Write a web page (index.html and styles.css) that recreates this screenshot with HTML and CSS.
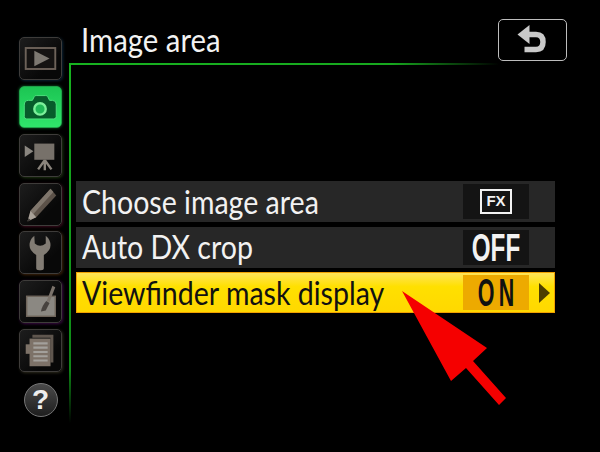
FILE: index.html
```html
<!DOCTYPE html>
<html lang="en">
<head>
<meta charset="utf-8">
<title>Image area</title>
<link rel="stylesheet" href="styles.css">
</head>
<body>
<div class="screen">
  <nav class="sidebar">
    <div class="tab tab-blue">
      <svg viewBox="0 0 43 43" class="icon"><rect x="6" y="10.500" width="31" height="22" fill="#151312" stroke="#6d6259" stroke-width="2"/><path d="M15 13.500 L31 21.500 L15 29.500Z" fill="#7d7871"/></svg>
    </div>
    <div class="tab tab-active">
      <svg viewBox="0 0 43 43" class="icon"><path d="M4.500 19 Q4.500 14 9 14 L13 14 L15 10 Q15.500 9 17 9 L27 9 Q28.500 9 29 10 L31 14 L34 14 Q38 14 38 18 L38 31 Q38 33.500 35.500 33.500 L7 33.500 Q4.500 33.500 4.500 31Z" fill="#075c2b" stroke="#4fe37f" stroke-width="1"/><circle cx="21" cy="23" r="6" fill="#1fb957" stroke="#7cf09a" stroke-width="2.500"/></svg>
    </div>
    <div class="tab tab-green">
      <svg viewBox="0 0 43 43" class="icon"><path d="M5 11 L14 17 L5 23Z" fill="#8a8680"/><rect x="15" y="9" width="21" height="17" fill="#77716a"/><path d="M26 26 L26 31 M25.500 27 L19 36 M26.500 27 L33 36 M26 28 L26 37" stroke="#8a847c" stroke-width="2.500" fill="none"/></svg>
    </div>
    <div class="tab tab-red">
      <svg viewBox="0 0 43 43" class="icon"><path d="M32 5 L38 12 L17 35 L8 39 L11 28Z" fill="#5c5249"/><path d="M32 5 L35 8.500 L14 31.500 L11 28Z" fill="#7f766c"/><path d="M11 28 L17 35 L8 39Z" fill="#a8a198"/><path d="M8.800 36 L11.500 38 L8 39.500Z" fill="#3a3633"/></svg>
    </div>
    <div class="tab tab-orange">
      <svg viewBox="0 0 43 43" class="icon"><path d="M15 4 Q10 8 10 14 Q10 20 17 24 L17 38 Q17 40 20 40 L22 40 Q25 40 25 38 L25 24 Q32 20 32 14 Q32 8 27 4 L27 12 Q21 17 15.500 12Z" fill="#827c74"/></svg>
    </div>
    <div class="tab tab-purple">
      <svg viewBox="0 0 43 43" class="icon"><rect x="7" y="16" width="30" height="21" fill="#8b8882" stroke="#6f655b" stroke-width="1.500"/><path d="M34 5 L37 6.500 L31 22 L28 21Z" fill="#7b736b"/><path d="M27.500 21 L31 23 L27 31 L22 32 Q23 26 27.500 21Z" fill="#47423e"/></svg>
    </div>
    <div class="tab tab-olive">
      <svg viewBox="0 0 43 43" class="icon"><path d="M13 5 L35 5 L35 34 L32 34 L32 8 L13 8Z" fill="#5f564e"/><path d="M11 15 L6 15 L6 25 L11 25Z" fill="#7d7268"/><rect x="10" y="9" width="22" height="29" fill="#7d7268"/><path d="M14 14 H29 M14 18.500 H29 M14 23 H29 M14 27.500 H29 M14 32 H29" stroke="#a3a09b" stroke-width="2.200"/></svg>
    </div>
    <div class="help">?</div>
  </nav>
  <main class="main">
    <header class="header">
      <h1 class="title"><span class="squeeze squeeze-title">Image area</span></h1>
      <div class="back">
        <svg viewBox="0 0 66 39" class="back-icon"><path d="M28 14.500 H37 Q44 14.500 44 22 Q44 29.500 37 29.500 H25.500" fill="none" stroke="#c9c9c9" stroke-width="5.500"/><path d="M18.500 14.500 L30.500 5 L30.500 24Z" fill="#c9c9c9"/></svg>
      </div>
    </header>
    <section class="panel">
      <div class="row">
        <span class="label"><span class="squeeze">Choose image area</span></span>
        <span class="value"><span class="fx">FX</span></span>
      </div>
      <div class="row">
        <span class="label"><span class="squeeze">Auto DX crop</span></span>
        <span class="value"><span class="big">OFF</span></span>
      </div>
      <div class="row row-active">
        <span class="label"><span class="squeeze">Viewfinder mask display</span></span>
        <span class="value value-on"><span class="big big-on">ON</span></span>
        <span class="caret"></span>
      </div>
    </section>
  </main>
  <svg class="pointer" viewBox="0 0 600 452"><path d="M402 291 L487 348 L473 361 L506 398 L499 405 L466 368 L451 381Z" fill="#f50000"/></svg>
</div>
</body>
</html>
```
FILE: styles.css
```css
* { box-sizing: border-box; }
html, body { margin: 0; padding: 0; background: #000; }
.screen {
  position: relative;
  display: flex;
  width: 600px;
  height: 452px;
  overflow: hidden;
  background: #000;
  font-family: "Lato", "Open Sans", sans-serif;
}
.sidebar {
  display: flex;
  flex-direction: column;
  align-items: center;
  gap: 5.7px;
  width: 43px;
  margin-left: 19px;
  padding-top: 37px;
}
.tab {
  flex: none;
  width: 43px;
  height: 43px;
  border: 1px solid #3e3c3a;
  border-radius: 5px;
  background: linear-gradient(135deg, #1d1d1d, #080808 70%);
}
.icon { display: block; width: 41px; height: 41px; }
.tab-blue { box-shadow: 1px 1px 3px #0c2436; }
.tab-green { box-shadow: 1px 1px 3px #1d3310; }
.tab-red { box-shadow: 1px 1px 3px #3c0a1c; }
.tab-orange { box-shadow: 1px 1px 3px #3f2208; }
.tab-purple { box-shadow: 1px 1px 3px #3c0a44; }
.tab-olive { box-shadow: 1px 1px 3px #2c2a1c; }
.tab-active {
  height: 42.500px;
  border-color: #1fa049;
  background: linear-gradient(180deg, #1cc553, #2fe56b);
  box-shadow: 0 0 3px #0d6a2c;
}
.help {
  width: 34px;
  height: 34px;
  margin-top: 6px;
  border: 1.500px solid #777;
  border-radius: 50%;
  background: linear-gradient(180deg, #4a4a4a, #1e1e1e);
  color: #eee;
  font: bold 28px/31px "Liberation Sans", sans-serif;
  text-align: center;
}
.main { flex: 1; display: flex; flex-direction: column; margin-left: 7px; }
.header {
  display: flex;
  justify-content: space-between;
  align-items: flex-start;
  height: 63px;
  padding: 19px 33px 0 12px;
}
.title {
  margin: 0;
  color: #f2f2f2;
  font-size: 33px;
  font-weight: 400;
  line-height: 40px;
}
.squeeze {
  display: inline-block;
  transform: scaleX(0.865);
  transform-origin: left center;
  white-space: nowrap;
}
.squeeze-title { transform: scaleX(0.89); }
.back {
  width: 69px;
  height: 42px;
  border: 1.500px solid #bdbdbd;
  border-radius: 5px;
}
.back-icon { display: block; width: 66px; height: 39px; }
.panel {
  display: flex;
  flex-direction: column;
  gap: 4.500px;
  height: 360px;
  padding: 118px 0 0 7px;
  background:
    linear-gradient(90deg, #17b320 0%, #17a81e 75%, #000 100%) 0 0 / 430px 2px no-repeat,
    linear-gradient(180deg, #17b320 0%, #0f8a17 85%, #000 100%) 0 0 / 2px 100% no-repeat;
}
.row {
  display: flex;
  align-items: center;
  width: 479px;
  height: 41px;
  padding: 0 0 0 6px;
  background: #272727;
  color: #f2f2f2;
  font-size: 33px;
}
.label { width: 381px; padding-bottom: 2px; line-height: 38px; white-space: nowrap; }
.value {
  display: flex;
  align-items: center;
  justify-content: center;
  width: 66px;
  height: 35px;
  background: #141414;
}
.fx {
  width: 32px;
  height: 25px;
  border: 2.500px solid #f2f2f2;
  color: #f2f2f2;
  font: bold 15px/20px "Liberation Sans", sans-serif;
  text-align: center;
}
.big {
  display: inline-block;
  font: bold 39px/35px "Liberation Sans", sans-serif;
  transform: scaleX(0.62);
  transform-origin: center;
}
.big-on { letter-spacing: 8px; margin-right: -4px; transform: scaleX(0.55); }
.row-active {
  position: relative;
  border: 1px solid #f0a000;
  background: linear-gradient(180deg, #ffe45a 0%, #ffe000 35%, #ffd800 100%);
  color: #111;
  padding-left: 5px;
}
.value-on { background: #edaa00; color: #111; }
.caret {
  width: 0;
  height: 0;
  margin-left: 10px;
  border-left: 11px solid #4d3d00;
  border-top: 10.500px solid transparent;
  border-bottom: 10.500px solid transparent;
}
.pointer { position: absolute; left: 0; top: 0; width: 600px; height: 452px; pointer-events: none; }
```
